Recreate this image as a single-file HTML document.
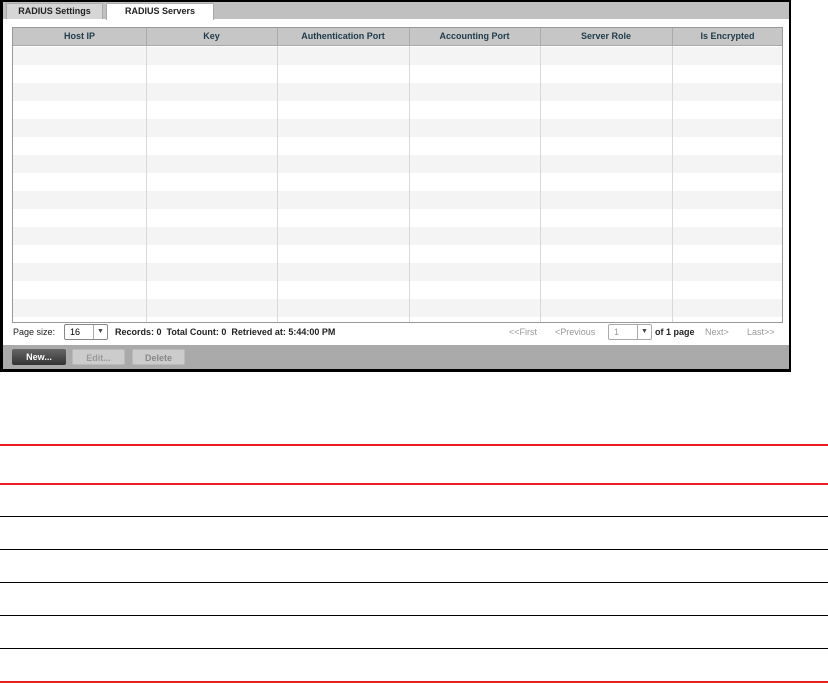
<!DOCTYPE html>
<html><head><style>
*{margin:0;padding:0;box-sizing:border-box}
body{width:828px;height:683px;background:#fff;font-family:"Liberation Sans",Arial,sans-serif;position:relative;overflow:hidden}
.frame{position:absolute;left:0;top:0;width:791px;height:372px;background:#000}
.inner{position:absolute;left:3px;top:2px;width:786px;height:367px;background:#fff}
.tabbar{position:absolute;left:0;top:0;width:786px;height:17px;background:#c0c0c0}
.tab{position:absolute;top:1px;height:16px;font-size:9px;font-weight:bold;color:#222;text-align:center;line-height:15px;border:1px solid #aaa;border-bottom:none}
.grid{position:absolute;left:9px;top:25px;width:771px;height:296px;border:1px solid #999;overflow:hidden;background:#fff}
.hdr{position:absolute;left:0;top:0;width:100%;height:18px;background:#c6c6c6;border-bottom:1px solid #aaa}
.hdr div{position:absolute;top:0;height:18px;line-height:17px;font-size:9px;font-weight:bold;color:#1e3b4a;text-align:center}
.row{position:absolute;left:0;width:100%;height:18px}
.vl{position:absolute;top:18px;bottom:0;width:1px;background:#d8d8d8}
.hl{position:absolute;top:0;height:18px;width:1px;background:#aaa}
.pg{position:absolute;top:325px;font-size:9px;color:#222;white-space:nowrap}
.footer{position:absolute;left:0;top:343px;width:786px;height:24px;background:#aaa}
.btn{position:absolute;top:4px;height:16px;font-size:9px;font-weight:bold;text-align:center;line-height:16px;border-radius:2px}
.sel{position:absolute;height:16px;border:1px solid #888;border-radius:2px;background:#fff;font-size:9px;line-height:14px;padding-left:5px}
.sel span{position:absolute;right:0;top:0;width:14px;height:14px;border-left:1px solid #aaa;font-size:7px;text-align:center;line-height:14px;color:#444}
.line{position:absolute;left:0;width:828px}
</style></head><body>
<div class="frame"><div class="inner">
<div class="tabbar">
<div class="tab" style="left:3px;width:97px;background:#d6d6d6">RADIUS Settings</div>
<div class="tab" style="left:103px;width:108px;background:#fff;height:17px">RADIUS Servers</div>
</div>
<div class="grid">
<div class="row" style="top:19px;background:#f4f4f4"></div>
<div class="row" style="top:55px;background:#f4f4f4"></div>
<div class="row" style="top:91px;background:#f4f4f4"></div>
<div class="row" style="top:127px;background:#f4f4f4"></div>
<div class="row" style="top:163px;background:#f4f4f4"></div>
<div class="row" style="top:199px;background:#f4f4f4"></div>
<div class="row" style="top:235px;background:#f4f4f4"></div>
<div class="row" style="top:271px;background:#f4f4f4"></div>
<div class="hdr">
<div style="left:0;width:133px">Host IP</div>
<div style="left:133px;width:131px">Key</div>
<div style="left:264px;width:132px">Authentication Port</div>
<div style="left:396px;width:131px">Accounting Port</div>
<div style="left:527px;width:132px">Server Role</div>
<div style="left:659px;width:111px">Is Encrypted</div>
<div class="hl" style="left:133px"></div><div class="hl" style="left:264px"></div><div class="hl" style="left:396px"></div><div class="hl" style="left:527px"></div><div class="hl" style="left:659px"></div>
</div>
<div class="vl" style="left:133px"></div><div class="vl" style="left:264px"></div><div class="vl" style="left:396px"></div><div class="vl" style="left:527px"></div><div class="vl" style="left:659px"></div>
</div>
<div class="pg" style="left:10px">Page size:</div>
<div class="sel" style="left:61px;top:322px;width:44px">16<span>▼</span></div>
<div class="pg" style="left:112px;font-weight:bold">Records: 0 &nbsp;Total Count: 0 &nbsp;Retrieved at: 5:44:00 PM</div>
<div class="pg" style="left:506px;color:#999">&lt;&lt;First</div>
<div class="pg" style="left:552px;color:#999">&lt;Previous</div>
<div class="sel" style="left:605px;top:322px;width:44px;color:#999;border-color:#aaa">1<span>▼</span></div>
<div class="pg" style="left:652px;font-weight:bold">of 1 page</div>
<div class="pg" style="left:702px;color:#999">Next&gt;</div>
<div class="pg" style="left:744px;color:#999">Last&gt;&gt;</div>
<div class="footer">
<div class="btn" style="left:9px;width:54px;background:linear-gradient(#666,#333);color:#fff">New...</div>
<div class="btn" style="left:69px;width:53px;background:#ccc;color:#999;border:1px solid #bbb">Edit...</div>
<div class="btn" style="left:129px;width:53px;background:#ccc;color:#888;border:1px solid #bbb">Delete</div>
</div>
</div></div>
<div class="line" style="top:444px;height:2px;background:#ed1c24"></div>
<div class="line" style="top:483px;height:2px;background:#ed1c24"></div>
<div class="line" style="top:516px;height:1px;background:#000"></div>
<div class="line" style="top:549px;height:1px;background:#000"></div>
<div class="line" style="top:582px;height:1px;background:#000"></div>
<div class="line" style="top:615px;height:1px;background:#000"></div>
<div class="line" style="top:648px;height:1px;background:#000"></div>
<div class="line" style="top:681px;height:2px;background:#ed1c24"></div>
</body></html>
